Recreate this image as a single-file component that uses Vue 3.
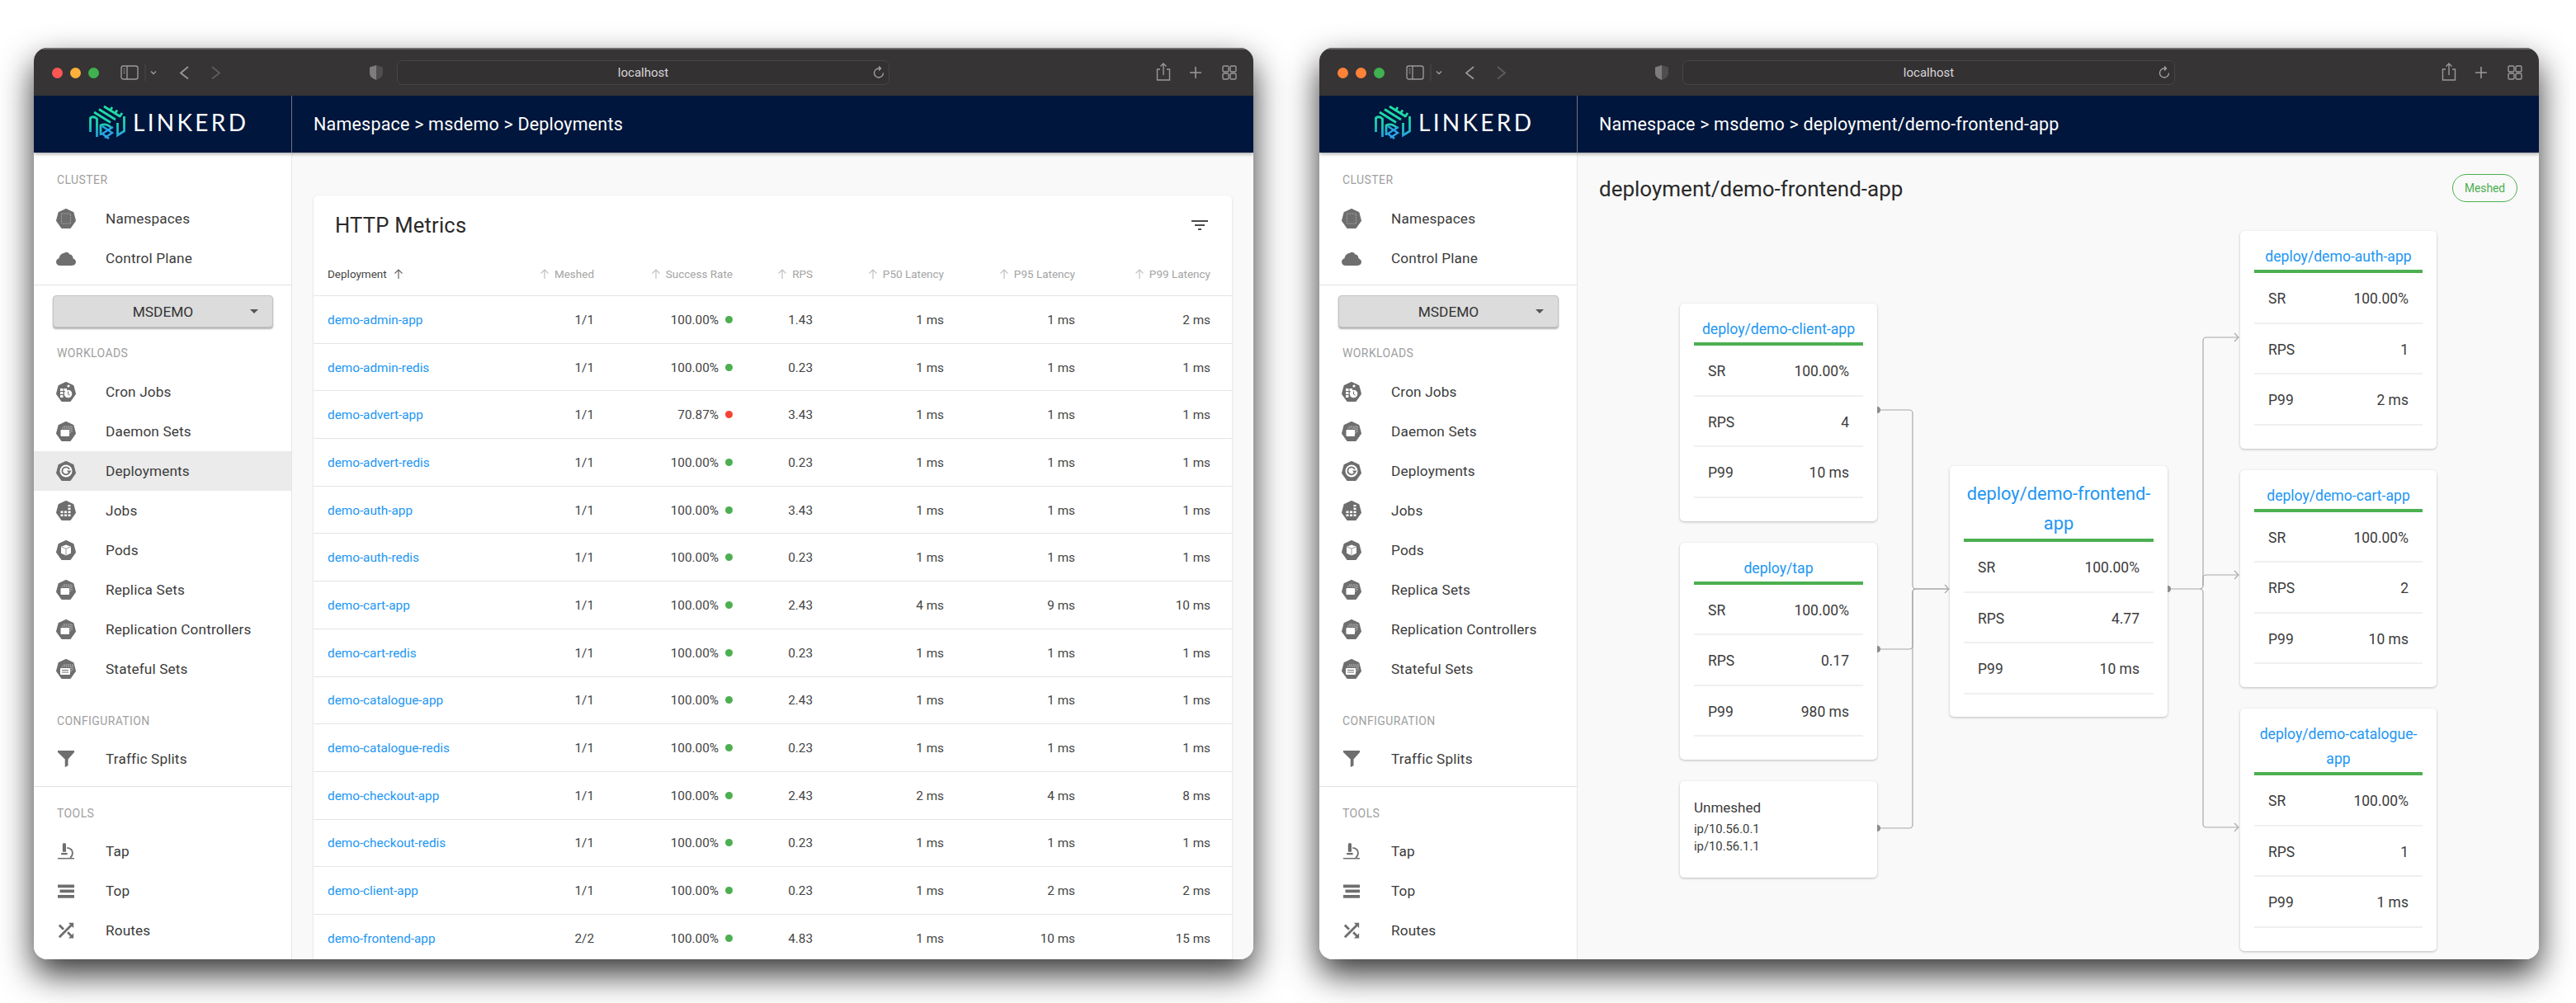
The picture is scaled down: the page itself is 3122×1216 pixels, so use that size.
<script setup>
const sidebarTop = [
  { label: 'Namespaces', icon: 'ns' },
  { label: 'Control Plane', icon: 'cloud' }
]
const workloads = [
  { label: 'Cron Jobs', icon: 'cron' },
  { label: 'Daemon Sets', icon: 'set' },
  { label: 'Deployments', icon: 'deploy', key: 'deployments' },
  { label: 'Jobs', icon: 'job' },
  { label: 'Pods', icon: 'pod' },
  { label: 'Replica Sets', icon: 'set' },
  { label: 'Replication Controllers', icon: 'set' },
  { label: 'Stateful Sets', icon: 'stateful' }
]
const config = [{ label: 'Traffic Splits', icon: 'filter' }]
const tools = [
  { label: 'Tap', icon: 'tap' },
  { label: 'Top', icon: 'top' },
  { label: 'Routes', icon: 'routes' }
]
const sections = [
  { title: 'CLUSTER', items: sidebarTop, cls: 's-cluster' },
  { title: 'WORKLOADS', items: workloads, cls: 's-work', select: true },
  { title: 'CONFIGURATION', items: config, cls: 's-config' },
  { title: 'TOOLS', items: tools, cls: 's-tools' }
]

const hexIcons = ['ns', 'cron', 'set', 'deploy', 'job', 'pod', 'stateful']
const smallIcons = ['filter', 'tap', 'top', 'routes']
function iconBox(icon) {
  return smallIcons.includes(icon) ? '-2.4 -2.4 28.8 28.8' : '0 0 24 24'
}

const windows = [
  { id: 'list', crumb: 'Namespace > msdemo > Deployments', lights: ['#fd5754', '#fdb03a', '#3fb24f'], active: 'deployments' },
  { id: 'detail', crumb: 'Namespace > msdemo > deployment/demo-frontend-app', lights: ['#ff8238', '#ff8238', '#3fb24f'], active: '' }
]

const columns = ['Meshed', 'Success Rate', 'RPS', 'P50 Latency', 'P95 Latency', 'P99 Latency']
const rows = [
  ['demo-admin-app', '1/1', '100.00%', '1.43', 1, 1, 2],
  ['demo-admin-redis', '1/1', '100.00%', '0.23', 1, 1, 1],
  ['demo-advert-app', '1/1', '70.87%', '3.43', 1, 1, 1],
  ['demo-advert-redis', '1/1', '100.00%', '0.23', 1, 1, 1],
  ['demo-auth-app', '1/1', '100.00%', '3.43', 1, 1, 1],
  ['demo-auth-redis', '1/1', '100.00%', '0.23', 1, 1, 1],
  ['demo-cart-app', '1/1', '100.00%', '2.43', 4, 9, 10],
  ['demo-cart-redis', '1/1', '100.00%', '0.23', 1, 1, 1],
  ['demo-catalogue-app', '1/1', '100.00%', '2.43', 1, 1, 1],
  ['demo-catalogue-redis', '1/1', '100.00%', '0.23', 1, 1, 1],
  ['demo-checkout-app', '1/1', '100.00%', '2.43', 2, 4, 8],
  ['demo-checkout-redis', '1/1', '100.00%', '0.23', 1, 1, 1],
  ['demo-client-app', '1/1', '100.00%', '0.23', 1, 2, 2],
  ['demo-frontend-app', '2/2', '100.00%', '4.83', 1, 10, 15]
]

const leftNodes = [
  { title: 'deploy/demo-client-app', sr: '100.00%', rps: '4', p99: '10 ms' },
  { title: 'deploy/tap', sr: '100.00%', rps: '0.17', p99: '980 ms' }
]
const centerNode = { title: 'deploy/demo-frontend-app', sr: '100.00%', rps: '4.77', p99: '10 ms' }
const rightNodes = [
  { title: 'deploy/demo-auth-app', sr: '100.00%', rps: '1', p99: '2 ms' },
  { title: 'deploy/demo-cart-app', sr: '100.00%', rps: '2', p99: '10 ms' },
  { title: 'deploy/demo-catalogue-app', sr: '100.00%', rps: '1', p99: '1 ms' }
]
</script>

<template>
  <div class="page">
    <div v-for="win in windows" :key="win.id" class="window">
      <div class="titlebar">
        <div class="lights">
          <span v-for="(c, i) in win.lights" :key="i" class="light" :style="{ background: c }"></span>
        </div>
        <svg class="tb-left" width="124" height="30" viewBox="0 0 124 30" fill="none" stroke="#9a9899" stroke-width="1.4">
          <rect x="1" y="7" width="20" height="16" rx="2.5" />
          <path d="M8 7v16" />
          <path d="M3.500 10.500h2M3.500 13h2M3.500 15.500h2" stroke-width="1" />
          <path d="M30 5v20" stroke="#4a4849" stroke-width="1" />
          <path d="M37 13.500l3 3 3-3" stroke-width="1.500" />
          <path d="M82 8l-9 7.500 9 7" stroke-width="1.800" />
          <path d="M111 8l9 7.500-9 7" stroke="#5e5c5d" stroke-width="1.800" />
        </svg>
        <svg class="shield" width="16" height="18" viewBox="0 0 16 18">
          <path d="M8 0l8 2.500V10c0 3.500-3.500 6.500-8 8z" fill="#4f4d4e" />
          <path d="M8 0L0 2.500V10c0 3.500 3.500 6.500 8 8z" fill="#7e7c7d" />
        </svg>
        <div class="urlbar">
          <span class="url">localhost</span>
          <svg class="reload" width="14" height="15" viewBox="0 0 14 15" fill="none" stroke="#a9a7a8" stroke-width="1.300">
            <path d="M12.500 8.500A5.500 5.500 0 1 1 7 3h1.500" />
            <path d="M7 .5l2.500 2.500L7 5.500" />
          </svg>
        </div>
        <svg class="tb-right" width="102" height="30" viewBox="0 0 102 30" fill="none" stroke="#9a9899" stroke-width="1.400">
          <path d="M8 11H4.500v13h15V11H16" />
          <path d="M12 4v14M8.500 7.500L12 4l3.500 3.500" />
          <path d="M51 8v14M44 15h14" stroke-width="1.600" />
          <rect x="84" y="7" width="7" height="7" rx="1.500" />
          <rect x="93" y="7" width="7" height="7" rx="1.500" />
          <rect x="84" y="16" width="7" height="7" rx="1.500" />
          <rect x="93" y="16" width="7" height="7" rx="1.500" />
        </svg>
      </div>

      <div class="appbar">
        <div class="brand">
          <svg class="logo" width="44" height="42" viewBox="0 0 44 42" fill="none" stroke-width="2.800">
            <defs>
              <linearGradient :id="'lg-' + win.id" gradientUnits="userSpaceOnUse" x1="0" y1="0" x2="0" y2="42">
                <stop offset="0" stop-color="#1fe3a0" />
                <stop offset="0.55" stop-color="#1fd0b0" />
                <stop offset="1" stop-color="#2597ea" />
              </linearGradient>
            </defs>
            <g :stroke="'url(#lg-' + win.id + ')'">
              <path d="M6 9l20 12.500M12 5.500l20 12.500M18 2l20 12.500" />
              <path d="M28 3l-3 4.500M34 6.500l-3 4.500M40 10l-3 4.500" />
              <path d="M42.500 14v18l-8 5V22" />
              <path d="M1.500 33V16c3-2 6-1 8 1v22" />
              <path d="M14 37V25c4-2 9-1 13 3" />
              <path d="M16 26l12 8-9 6M29 27l-13 8 8 6" stroke="#2aa6e8" stroke-width="2.400" />
            </g>
          </svg>
          <span class="wordmark">LINKERD</span>
        </div>
        <div class="crumb">{{ win.crumb }}</div>
      </div>

      <div class="body">
        <aside class="sidebar">
          <div v-for="s in sections" :key="s.title" class="section" :class="s.cls">
            <button v-if="s.select" class="ns-select">
              <span>MSDEMO</span>
              <i class="caret"></i>
            </button>
            <div class="section-title">{{ s.title }}</div>
            <div
              v-for="item in s.items"
              :key="item.label"
              class="nav-item"
              :class="{ selected: item.key && item.key === win.active }"
            >
              <svg class="nav-icon" width="24" height="24" :viewBox="iconBox(item.icon)">
                <polygon
                  v-if="hexIcons.includes(item.icon)"
                  points="12,1 20.500,5 23,14.500 17,23 7,23 1,14.500 3.500,5"
                  fill="#6e6e6e"
                  stroke="#6e6e6e"
                  stroke-width="2"
                  stroke-linejoin="round"
                />
                <rect v-if="item.icon === 'ns'" x="6.500" y="6" width="11" height="12" fill="none" stroke="#a0a0a0" stroke-width="1" stroke-dasharray="2 1" />
                <path v-if="item.icon === 'cloud'" d="M5 21c-3 0-5-2-5-4.500 0-2.200 1.500-4 3.500-4.300C4 8.500 7 6 9.500 6c2.500-2.500 6-1 7 1.500 1-.3 4 1 4 4.800 2 .7 3.500 2.300 3.500 4.500C24 19 22 21 19 21z" fill="#6e6e6e" />
                <template v-if="item.icon === 'cron'">
                  <path d="M5 8h3.500v3H5zM9.500 8H13v3H9.500zM5 12h3.500v3H5zM5 16h3.500v3H5z" fill="#fff" />
                  <circle cx="15" cy="5" r="1.600" fill="#fff" />
                  <circle cx="14.500" cy="14.500" r="4.800" fill="#fff" />
                  <path d="M14.500 11.500v3.300l2.200 1.300" fill="none" stroke="#6e6e6e" stroke-width="1" />
                </template>
                <template v-if="item.icon === 'set'">
                  <rect x="5.500" y="10" width="10.500" height="8" rx="1" fill="#fff" />
                  <path d="M7 8h10v7M9 6h10v7" fill="none" stroke="#c8c8c8" stroke-width="1.100" stroke-dasharray="1.500 1" />
                </template>
                <template v-if="item.icon === 'deploy'">
                  <circle cx="12" cy="12" r="7.500" fill="#fff" />
                  <path d="M15.500 14.500a4.500 4.500 0 1 1 .500-4.500" fill="none" stroke="#6e6e6e" stroke-width="1.800" />
                  <path d="M13 11.500h5.500L16 15.500z" fill="#6e6e6e" />
                </template>
                <path v-if="item.icon === 'job'" d="M5.500 12.500h3v2.500h-3zM10 12.500h3v2.500h-3zM14.500 12.500h3v2.500h-3zM5.500 16.500h3V19h-3zM10 16.500h3V19h-3zM14.500 16.500h3V19h-3zM14.500 8.500h3V11h-3zM14.500 5h3v2h-3z" fill="#fff" />
                <template v-if="item.icon === 'pod'">
                  <path d="M12 5.500l6 2.200v8L12 18.500l-6-2.800v-8z" fill="#fff" />
                  <path d="M6.500 8L12 10.200 17.500 8M12 10.200v8" fill="none" stroke="#9b9b9b" stroke-width="1" />
                </template>
                <template v-if="item.icon === 'stateful'">
                  <rect x="5" y="11" width="12" height="8" rx="1" fill="#fff" />
                  <path d="M7 13.500h8M7 16h8" stroke="#6e6e6e" stroke-width="1" />
                  <path d="M7 9h11v7M9 7h11v7" fill="none" stroke="#c8c8c8" stroke-width="1.100" stroke-dasharray="1.500 1" />
                </template>
                <path v-if="item.icon === 'filter'" d="M0 0h24v2.500l-9 10V22l-4.500 2v-11.500L0 2.500z" fill="#6e6e6e" />
                <template v-if="item.icon === 'tap'">
                  <path d="M9.500 0c1.500 0 2.500 1 2.500 2.500V13H7V2.500C7 1 8 0 9.500 0z" fill="#6e6e6e" />
                  <path d="M5 14.500h9v2.500H5z" fill="#6e6e6e" />
                  <path d="M13.500 7c4.500.5 8 3 8 7.500 0 3-1.500 5.500-3.500 7" fill="none" stroke="#6e6e6e" stroke-width="2.200" />
                  <path d="M0 21.500h24v2H0z" fill="#6e6e6e" />
                </template>
                <path v-if="item.icon === 'top'" d="M0 3h24v4.500H0zM3 10.200h21v4.500H3zM0 18h24v4.500H0z" fill="#6e6e6e" />
                <path v-if="item.icon === 'routes'" d="M9.600 9.200L3.400 3 1 5.400l6.200 6.200zM15.500 1l2.600 2.600L1 20.700 3.400 23 20.500 6l2.500 2.600V1zM15.700 13.400l-2.400 2.400 4.900 4.900-2.700 2.800H23v-7.500l-2.400 2.600z" fill="#6e6e6e" />
              </svg>
              <span class="nav-label">{{ item.label }}</span>
            </div>
          </div>
        </aside>

        <main v-if="win.id === 'list'" class="content list">
          <div class="card">
            <div class="card-head">
              <span class="card-title">HTTP Metrics</span>
              <svg width="24" height="24" viewBox="0 0 24 24" fill="#4a4a4a"><path d="M2 6h20v2H2zM6 11h12v2H6zM10 16h4v2h-4z" /></svg>
            </div>
            <div class="t-row t-head">
              <div class="c-name"><span class="head-on">Deployment</span><svg class="sort on" width="14" height="14" viewBox="0 0 14 14"><path d="M7 13V2M2.500 6.500L7 2l4.500 4.500" /></svg></div>
              <div v-for="(c, i) in columns" :key="c" :class="'c' + i">
                <svg class="sort" width="14" height="14" viewBox="0 0 14 14"><path d="M7 13V2M2.500 6.500L7 2l4.500 4.500" /></svg>{{ c }}
              </div>
            </div>
            <div v-for="r in rows" :key="r[0]" class="t-row">
              <div class="c-name link">{{ r[0] }}</div>
              <div class="c0">{{ r[1] }}</div>
              <div class="c1">{{ r[2] }}<i class="dot" :class="{ bad: r[2] !== '100.00%' }"></i></div>
              <div class="c2">{{ r[3] }}</div>
              <div class="c3">{{ r[4] }} ms</div>
              <div class="c4">{{ r[5] }} ms</div>
              <div class="c5">{{ r[6] }} ms</div>
            </div>
          </div>
        </main>

        <main v-else class="content detail">
          <div class="detail-head">
            <h1 class="detail-title">deployment/demo-frontend-app</h1>
            <span class="chip">Meshed</span>
          </div>
          <div class="graph">
            <div class="g-col g-left">
              <div v-for="n in leftNodes" :key="n.title" class="node">
                <div class="node-title">{{ n.title }}</div>
                <div class="node-row"><span>SR</span><span>{{ n.sr }}</span></div>
                <div class="node-row"><span>RPS</span><span>{{ n.rps }}</span></div>
                <div class="node-row"><span>P99</span><span>{{ n.p99 }}</span></div>
              </div>
              <div class="node unmeshed">
                <div class="um-title">Unmeshed</div>
                <div class="um-ip">ip/10.56.0.1</div>
                <div class="um-ip">ip/10.56.1.1</div>
              </div>
            </div>
            <div class="g-col g-center">
              <div class="node wide">
                <div class="node-title big">{{ centerNode.title }}</div>
                <div class="node-row"><span>SR</span><span>{{ centerNode.sr }}</span></div>
                <div class="node-row"><span>RPS</span><span>{{ centerNode.rps }}</span></div>
                <div class="node-row"><span>P99</span><span>{{ centerNode.p99 }}</span></div>
              </div>
            </div>
            <div class="g-col g-right">
              <div v-for="n in rightNodes" :key="n.title" class="node">
                <div class="node-title">{{ n.title }}</div>
                <div class="node-row"><span>SR</span><span>{{ n.sr }}</span></div>
                <div class="node-row"><span>RPS</span><span>{{ n.rps }}</span></div>
                <div class="node-row"><span>P99</span><span>{{ n.p99 }}</span></div>
              </div>
            </div>
            <svg class="edges" width="724" height="800" viewBox="0 0 724 800" fill="none" stroke="#a8a8a8" stroke-width="1.200">
              <path d="M239 225h39a4 4 0 0 1 4 4v209a4 4 0 0 0 4 4h40" />
              <path d="M239 515h39a4 4 0 0 0 4-4v-65a4 4 0 0 1 4-4h40" />
              <path d="M239 732h39a4 4 0 0 0 4-4v-282a4 4 0 0 1 4-4" />
              <path d="M321 437l5 5-5 5" />
              <path d="M591 442h39a4 4 0 0 0 4-4v-297a4 4 0 0 1 4-4h39" />
              <path d="M634 438v-9a4 4 0 0 1 4-4h39" />
              <path d="M630 442a4 4 0 0 1 4 4v281a4 4 0 0 0 4 4h39" />
              <path d="M672 132l5 5-5 5M672 420l5 5-5 5M672 726l5 5-5 5" />
              <path d="M239 221a4 4 0 0 1 0 8zM239 511a4 4 0 0 1 0 8zM239 728a4 4 0 0 1 0 8zM591 438a4 4 0 0 1 0 8z" fill="#8c8c8c" stroke="none" />
            </svg>
          </div>
        </main>
      </div>
    </div>
  </div>
</template>

<style>
html, body { margin: 0; background: #fff; overflow: hidden; }
</style>

<style scoped>
.page {
  width: 3122px;
  height: 1216px;
  display: flex;
  gap: 80px;
  padding: 58px 0 0 41px;
  box-sizing: border-box;
  overflow: hidden;
  font-family: Roboto, "Liberation Sans", sans-serif;
  color: #3a3a3a;
  background: #fff;
}
.window {
  width: 1478px;
  height: 1105px;
  flex: none;
  border-radius: 16px;
  overflow: hidden;
  display: flex;
  flex-direction: column;
  box-shadow: 0 18px 40px rgba(0, 0, 0, 0.8);
  background: #fff;
}
.titlebar {
  height: 58px;
  flex: none;
  background: #363435;
  border-top: 2px solid #6e6d6d;
  box-sizing: border-box;
  display: flex;
  align-items: center;
}
.lights { display: flex; gap: 9px; margin-left: 22px; }
.light { width: 13px; height: 13px; border-radius: 50%; }
.tb-left { margin-left: 26px; }
.shield { margin-left: 178px; flex: none; }
.urlbar {
  margin-left: 17px;
  width: 597px;
  height: 30px;
  flex: none;
  border-radius: 7px;
  border: 1px solid #474546;
  box-sizing: border-box;
  display: flex;
  align-items: center;
  justify-content: center;
  position: relative;
  background: #333132;
}
.url { color: #d8d6d7; font-size: 15px; }
.reload { position: absolute; right: 5px; top: 6px; }
.tb-right { margin-left: auto; margin-right: 19px; }

.appbar {
  height: 69px;
  flex: none;
  background: #00163c;
  display: flex;
  color: #fff;
  box-shadow: 0 2px 4px rgba(0, 0, 0, 0.3);
  z-index: 2;
}
.brand {
  width: 313px;
  flex: none;
  display: flex;
  align-items: center;
  padding: 0 0 5px 67px;
  box-sizing: border-box;
  border-right: 1px solid #6a7488;
}
.logo { flex: none; }
.wordmark {
  margin-left: 9px;
  font-family: Lato, Roboto, sans-serif;
  font-weight: 400;
  font-size: 28px;
  letter-spacing: 3.300px;
}
.crumb {
  padding-left: 26px;
  font-size: 21.500px;
  line-height: 69px;
  letter-spacing: 0.2px;
}

.body { flex: 1; min-height: 0; display: flex; }
.sidebar {
  width: 313px;
  flex: none;
  border-right: 1px solid #e6e6e6;
  box-sizing: border-box;
  background: #fff;
}
.section-title {
  height: 24px;
  line-height: 24px;
  font-size: 14px;
  color: #a0a0a0;
  letter-spacing: 0.4px;
  padding-left: 28px;
  margin-bottom: 11px;
}
.s-cluster { padding: 21px 0 8px; border-bottom: 1px solid #e2e2e2; }
.s-work { padding-top: 12px; }
.s-config { padding: 27px 0 9px; border-bottom: 1px solid #e2e2e2; }
.s-config .section-title, .s-tools .section-title { margin-bottom: 10px; }
.s-tools { padding-top: 20px; }
.nav-item {
  height: 48px;
  display: flex;
  align-items: center;
  padding-left: 27px;
}
.nav-item.selected { background: #ebebeb; }
.nav-icon { flex: none; }
.nav-label {
  margin-left: 36px;
  font-size: 17.200px;
  letter-spacing: 0.15px;
  color: #3c3c3c;
  white-space: nowrap;
}
.ns-select {
  display: block;
  position: relative;
  margin: 0 0 19px 23px;
  width: 267px;
  height: 39px;
  border: 1px solid #c2c2c2;
  border-radius: 4px;
  background: #dcdcdc;
  box-shadow: 0 2px 2px rgba(0, 0, 0, 0.3);
  font-family: inherit;
  font-size: 17.300px;
  color: #333;
  padding: 0;
}
.caret {
  position: absolute;
  right: 17px;
  top: 16px;
  border: 5px solid transparent;
  border-top: 5px solid #555;
  border-bottom: 0;
}

.content { flex: 1; min-width: 0; background: #f9f9f9; }
.list { padding: 52px 26px 0; box-sizing: border-box; }
.card {
  background: #fff;
  border-radius: 5px 5px 0 0;
  box-shadow: 0 1px 3px rgba(0, 0, 0, 0.15);
}
.card-head {
  height: 65px;
  display: flex;
  align-items: center;
  justify-content: space-between;
  padding: 6px 27px 0 26px;
  box-sizing: border-box;
}
.card-title { font-size: 25.600px; color: #2a2a2a; letter-spacing: 0.2px; }

.t-row {
  height: 57.700px;
  padding-top: 1px;
  box-sizing: border-box;
  border-bottom: 1px solid #e4e4e4;
  display: flex;
  align-items: center;
  font-size: 15.300px;
  color: #444;
}
.t-row > div { box-sizing: border-box; flex: none; text-align: right; white-space: nowrap; }
.t-head { height: 57px; padding-top: 4px; font-size: 13.500px; color: #a4a4a4; }
.c-name { width: 202px; padding-left: 17px; text-align: left !important; }
.link { color: #2196f3; }
.head-on { color: #444; }
.c0 { width: 138px; }
.c1 { width: 168px; }
.c2 { width: 97px; }
.c3 { width: 159px; }
.c4 { width: 159px; }
.c5 { width: 164px; }
.sort { fill: none; stroke: #c2c2c2; stroke-width: 1.200; vertical-align: -2px; margin-right: 5px; }
.sort.on { stroke: #666; margin: 0 0 0 7px; }
.dot {
  display: inline-block;
  width: 9px;
  height: 9px;
  margin-left: 8px;
  border-radius: 50%;
  background: #4caf50;
  vertical-align: 1px;
}
.dot.bad { background: #f44336; }

.detail-head {
  height: 87px;
  display: flex;
  justify-content: space-between;
  align-items: center;
  padding: 0 26px;
  box-sizing: border-box;
}
.detail-title { margin: 0; font-weight: 400; font-size: 26px; color: #2a2a2a; }
.chip {
  width: 79px;
  height: 34px;
  line-height: 32px;
  box-sizing: border-box;
  border: 1px solid #4caf50;
  border-radius: 17px;
  text-align: center;
  color: #4caf50;
  font-size: 13.800px;
  margin-top: -1px;
}
.graph {
  display: flex;
  position: relative;
  padding-left: 124px;
  height: 800px;
}
.g-col { display: flex; flex-direction: column; gap: 26px; flex: none; }
.g-left { width: 239px; padding-top: 96px; }
.g-center { width: 264px; margin-left: 88px; padding-top: 293px; }
.g-right { width: 238px; margin-left: 88px; padding-top: 8px; }
.node {
  background: #fff;
  border-radius: 5px;
  box-shadow: 0 1px 3px rgba(0, 0, 0, 0.25);
  padding: 16px 17px 28px;
  box-sizing: border-box;
}
.node-title {
  text-align: center;
  color: #2196f3;
  font-size: 17.600px;
  line-height: 30px;
  padding-bottom: 1px;
  border-bottom: 4px solid #4caf50;
}
.node-title.big { font-size: 21.800px; line-height: 36px; padding-bottom: 0; }
.wide { padding-bottom: 27px; }
.node-row {
  display: flex;
  justify-content: space-between;
  height: 61.500px;
  line-height: 62px;
  font-size: 17.500px;
  padding: 0 17px;
  box-sizing: border-box;
  border-bottom: 2px solid #f0f0f0;
  color: #3c3c3c;
}
.unmeshed { padding-bottom: 0; height: 117px; }
.um-title { font-size: 17px; line-height: 32px; color: #3c3c3c; }
.um-ip { font-size: 14.800px; line-height: 21px; color: #3c3c3c; }
.edges { position: absolute; left: 124px; top: 0; pointer-events: none; overflow: visible; }
</style>
